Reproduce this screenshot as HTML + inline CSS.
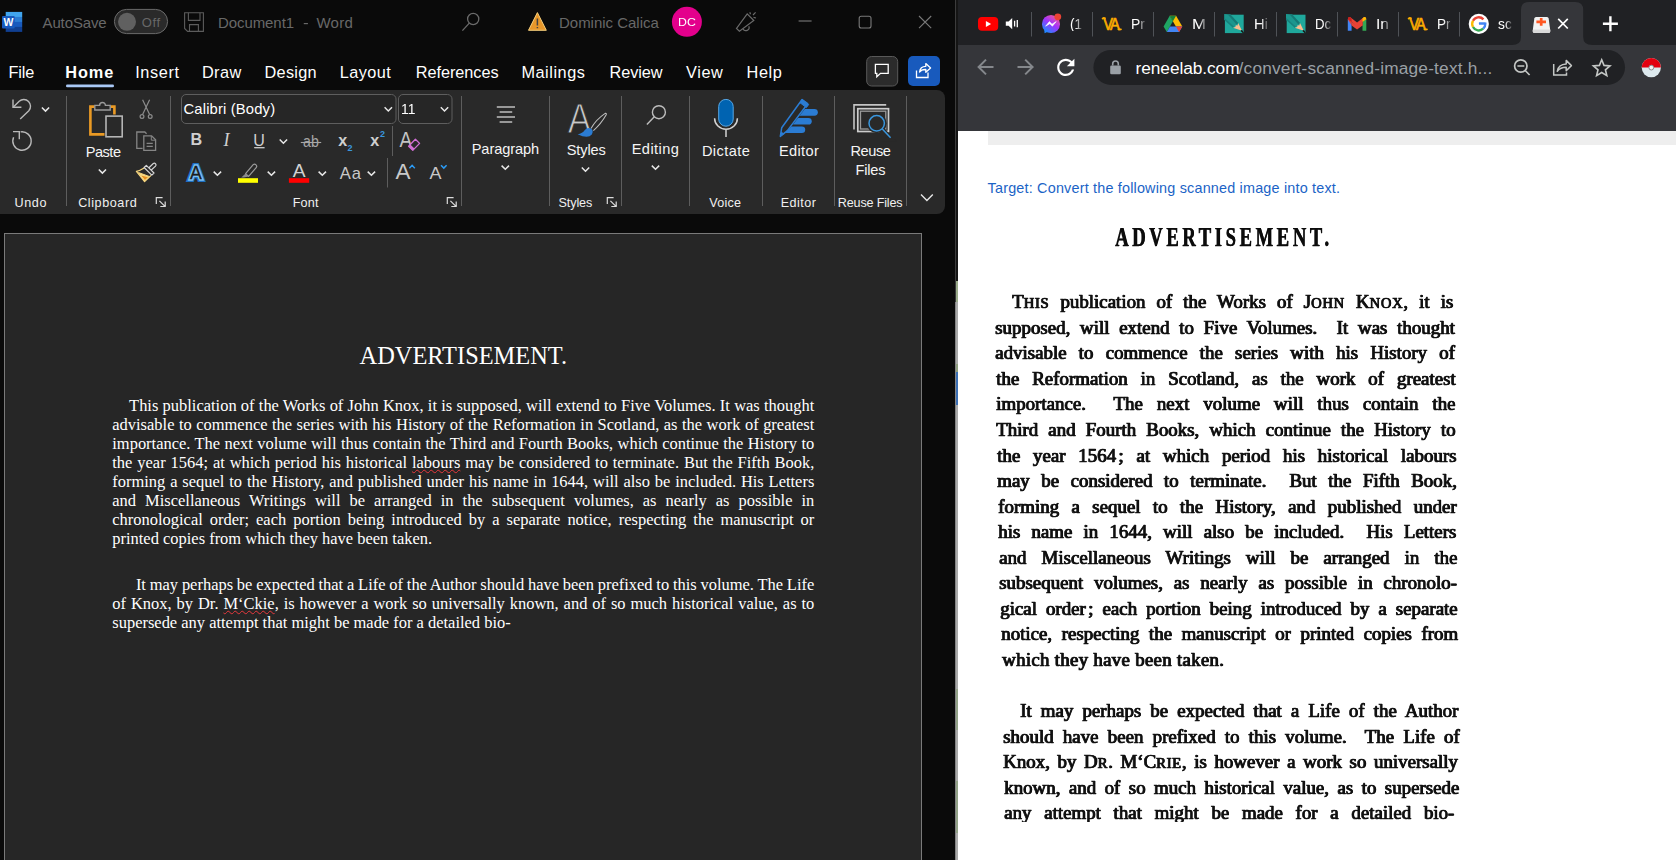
<!DOCTYPE html>
<html lang="en">
<head>
<meta charset="utf-8">
<title>Document1 - Word / reneelab.com</title>
<style>
html,body{margin:0;padding:0}
body{width:1676px;height:860px;overflow:hidden;position:relative;background:#0a0a0a;font-family:"Liberation Sans",sans-serif}
.a{position:absolute}
.t{position:absolute;white-space:pre}
svg{position:absolute;overflow:visible}
.sep{position:absolute;width:1px;background:#5b5b5b}
#word{left:0;top:0;width:955px;height:860px;background:#0a0a0a;overflow:hidden}
#ribbon{left:-10px;top:90px;width:955px;height:124px;background:#292929;border-radius:8px}
#page{left:4px;top:233px;width:918px;height:640px;background:#262626;border:1px solid #7a7a7a;box-sizing:border-box}
.doc{position:absolute;left:112.3px;width:702px;font:16.47px/18.93px "Liberation Serif",serif;color:#fff;text-align:justify;margin:0}
.dl{position:absolute;white-space:nowrap;font:16.47px/18.93px "Liberation Serif",serif;color:#fff;text-align:justify;text-align-last:justify}
.sq{text-decoration:underline wavy #e8383d 1px;text-underline-offset:0.5px;text-decoration-skip-ink:none}
#chrome{left:958px;top:0;width:718px;height:860px;background:#fff;overflow:hidden}
.tsep{position:absolute;top:12px;width:1px;height:25px;background:#4d5055}
.stitle{position:absolute;white-space:pre;font-family:"Liberation Serif",serif;font-weight:700;color:#0c0c0c;-webkit-text-stroke:.25px #0c0c0c;text-shadow:.6px 0 0 #0c0c0c;filter:blur(.35px)}
.scan{position:absolute;white-space:nowrap;font:400 19.6px/26px "Liberation Serif",serif;color:#111;text-align:justify;text-align-last:justify;-webkit-text-stroke:.7px #101010;text-shadow:.7px 0 0 #101010;filter:blur(.4px)}
</style>
</head>
<body>

<!-- ======================= WORD WINDOW ======================= -->
<div id="word" class="a">
  <div id="ribbon" class="a"></div>
  <svg width="955" height="230" viewBox="0 0 955 230" style="left:0;top:0" fill="none" stroke-linecap="butt">
  <!-- Word logo -->
  <rect x="5.7" y="11.9" width="16.5" height="5.1" fill="#41a5ee"/>
  <rect x="5.7" y="16.9" width="16.5" height="5.1" fill="#2b7cd3"/>
  <rect x="5.7" y="21.9" width="16.5" height="5.1" fill="#185abd"/>
  <rect x="5.7" y="26.9" width="16.5" height="5" fill="#103f91"/>
  <rect x="2" y="16" width="12.7" height="12.6" rx="1" fill="#185abd"/>
  <text x="8.35" y="26.3" text-anchor="middle" font-family="Liberation Sans, sans-serif" font-weight="700" font-size="10.5" fill="#fff">W</text>
  <!-- autosave toggle -->
  <rect x="114.4" y="9.4" width="53.2" height="24.2" rx="12.1" fill="#2a2a2a" stroke="#6b6b6b" stroke-width="1"/>
  <circle cx="127" cy="21.8" r="9" fill="#606060"/>
  <!-- save -->
  <g stroke="#5c5c5c" stroke-width="1.1">
    <path d="M184.6 12.7H203.4V31.4H187.6L184.6 28.4Z"/>
    <path d="M188.4 12.7V20.4H200V12.7"/>
    <path d="M189.5 31.4V24.6H198.4V31.4"/>
  </g>
  <!-- search -->
  <g stroke="#6b6b6b" stroke-width="1.3">
    <circle cx="473.2" cy="19" r="5.6"/>
    <path d="M469.3 23.1L462.4 30.6"/>
  </g>
  <!-- warning -->
  <path d="M537.4 12.6L546.3 30.3H528.5Z" fill="#e8972a" stroke="#f6cf7c" stroke-width="1" stroke-linejoin="round"/>
  <path d="M537.4 18.5V25.6M537.4 27V28.2" stroke="#444" stroke-width="1.5"/>
  <!-- avatar -->
  <circle cx="686.9" cy="21.8" r="15" fill="#e3008c"/>
  <!-- megaphone -->
  <g stroke="#6b6b6b" stroke-width="1.2" stroke-linejoin="miter">
    <path d="M747.2 13.8L753.8 20.5L739.4 31.3L736.5 28.5Z"/>
    <path d="M743 28.7A3 3 0 0 0 748.8 26.2"/>
    <path d="M749.8 12.3L750.5 14.2M753 15L755.6 12.4M753.5 17.4L756 18"/>
  </g>
  <!-- window buttons -->
  <g stroke="#7a7a7a" stroke-width="1.1">
    <path d="M798.6 21H811.6"/>
    <rect x="859.2" y="16.2" width="11.8" height="11.8" rx="2"/>
    <path d="M919 16L931.2 28.2M931.2 16L919 28.2"/>
  </g>
  <!-- tab underline -->
  <rect x="66" y="84.6" width="48" height="2.6" rx="1.3" fill="#a9c8f5"/>
  <!-- comment / share buttons -->
  <rect x="866.7" y="56.5" width="31" height="29.5" rx="5" fill="#2b2b2b" stroke="#595959" stroke-width="1"/>
  <path d="M875.4 64.3H888.2V73.3H880.5L876.8 76.8V73.3H875.4Z" stroke="#fff" stroke-width="1.3" stroke-linejoin="miter"/>
  <rect x="908" y="56" width="32" height="30" rx="5" fill="#185abd"/>
  <g stroke="#fff" stroke-width="1.3">
    <path d="M916.5 70.5V77.5H928V72.5"/>
    <path d="M919.5 72C920 68 923 66.3 925.8 66.3V63.6L930.6 67.9L925.8 72.2V69.5C923.5 69.4 921 70 919.5 72Z" stroke-linejoin="round"/>
  </g>

  <!-- ============ ribbon ============ -->
  <!-- separators -->
  <g stroke="#5d5d5d" stroke-width="1">
    <path d="M66.5 96V206M170.5 96V206M461.5 96V206M549.5 96V206M621.5 96V206M689.5 96V206M762.5 96V206M834.5 96V206M906.5 96V206"/>
    <path d="M392.5 126V156M387.5 158V187.5"/>
  </g>
  <!-- font boxes -->
  <rect x="181.5" y="94.5" width="214.5" height="29" rx="4.5" stroke="#5e5e5e" stroke-width="1" fill="#262626"/>
  <rect x="398.5" y="94.5" width="53.5" height="29" rx="4.5" stroke="#5e5e5e" stroke-width="1" fill="#262626"/>
  <!-- undo / redo -->
  <g stroke="#b9b9b9" stroke-width="1.4">
    <path d="M13 99.6V107.3H21.4"/>
    <path d="M13.4 106.9L19.2 101.2A6.8 6.8 0 0 1 28.8 110.8L20.2 119"/>
    <path d="M13 131.6H19.3V139.2"/>
    <path d="M20.6 131.9A9.2 9.2 0 1 1 13.6 137.2"/>
  </g>
  <!-- small chevrons -->
  <g stroke="#e8e8e8" stroke-width="1.5">
    <path d="M41.9 107.4L45.5 111.1L49.1 107.4"/>
    <path d="M98.8 169.4L102.4 173.1L106 169.4"/>
    <path d="M384.6 107.3L388.3 111L392 107.3"/>
    <path d="M440.8 107.3L444.5 111L448.2 107.3"/>
    <path d="M279.7 139.5L283.4 143.2L287.1 139.5"/>
    <path d="M213.7 171.6L217.4 175.3L221.1 171.6"/>
    <path d="M267.7 171.6L271.4 175.3L275.1 171.6"/>
    <path d="M318.6 171.6L322.3 175.3L326 171.6"/>
    <path d="M367.7 171.6L371.4 175.3L375.1 171.6"/>
    <path d="M501.6 165.6L505.3 169.3L509 165.6"/>
    <path d="M581.8 167.5L585.5 171.2L589.2 167.5"/>
    <path d="M651.8 165.6L655.5 169.3L659.2 165.6"/>
    <path d="M921 194.6L926.9 200.4L932.8 194.6" stroke-width="1.4"/>
  </g>
  <!-- paste -->
  <path d="M94.5 106.6H90.4V134.4H104.5M110.5 106.6H114.4V114.5" stroke="#ea9a24" stroke-width="2.6"/>
  <path d="M94.5 106.6H90.4V134.4H104.5M110.5 106.6H114.4V114.5" stroke="#f8c869" stroke-width="0.8" transform="translate(-0.9,0)" opacity=".0"/>
  <path d="M94.8 110V105.4H99.6A2.9 2.9 0 0 1 105.4 105.4H110.2V110Z" stroke="#9a9a9a" stroke-width="1.4" fill="#292929"/>
  <rect x="106" y="116.1" width="16.2" height="20.7" stroke="#b5b5b5" stroke-width="1.6" fill="#292929"/>
  <!-- cut (disabled) -->
  <g stroke="#8c8c8c" stroke-width="1.2">
    <path d="M142.6 99.8L149.6 114.6M149.6 99.8L142.6 114.6"/>
    <circle cx="142" cy="116.5" r="1.9"/>
    <circle cx="150.2" cy="116.5" r="1.9"/>
  </g>
  <!-- copy (disabled) -->
  <g stroke="#858585" stroke-width="1.3">
    <path d="M142.6 148.3H136.8V132H144.8L146.6 133.8"/>
    <path d="M143.8 135.8H151.6L155.6 139.8V150.4H143.8Z"/>
    <path d="M151.3 136V140.2H155.4" stroke-width="1"/>
    <path d="M146.6 143.4H152.8M146.6 146.4H152.8" stroke-width="1.1"/>
  </g>
  <!-- format painter -->
  <path d="M137.600 172.300L149.700 176.700L144.600 181.400Z" fill="#f8da86"/>
  <path d="M141.200 175.400L148 177.300L145 180Z" fill="#e8901f"/>
  <path d="M144.200 168Q140 170.600 136.400 171.400L144.600 181.500L151.100 175.400" stroke="#f7d67e" stroke-width="1.200" stroke-linejoin="round"/>
  <path d="M138.400 172.500L149.600 176.600" stroke="#f7d67e" stroke-width="1"/>
  <path d="M148.900 167.700L153.300 163.500Q154.600 162.600 155.600 163.800Q156.600 165 155.500 166.100L151.300 170" stroke="#d6d6d6" stroke-width="1.200" fill="#292929"/>
  <path d="M144.100 167.500L146.300 165.400L154 173L151.800 175.100Z" stroke="#d6d6d6" stroke-width="1.200" fill="#292929" stroke-linejoin="round"/>
  <!-- dialog launchers -->
  <g stroke="#dcdcdc" stroke-width="1.2">
    <path d="M156.3 204V197.7H162.6M159.4 200.8L165 206.4M165.2 201.6V206.5H160.3"/>
    <path d="M447.3 204V197.7H453.6M450.4 200.8L456 206.4M456.2 201.6V206.5H451.3"/>
    <path d="M607.3 204V197.7H613.6M610.4 200.8L616 206.4M616.2 201.6V206.5H611.3"/>
  </g>

  <!-- B I U ab x2 x2 -->
  <g font-family="Liberation Sans, sans-serif" fill="#cfcfcf" stroke="none">
    <text x="190.6" y="145.4" font-weight="700" font-size="16.2">B</text>
    <text x="223.6" y="145.6" font-family="Liberation Serif, serif" font-style="italic" font-size="18">I</text>
    <text x="253.3" y="145.5" font-size="16.6" textLength="11.6" lengthAdjust="spacingAndGlyphs">U</text>
    <text x="303" y="147" font-size="15.6" fill="#a6a6a6" textLength="15.8" lengthAdjust="spacingAndGlyphs">ab</text>
    <text x="338.2" y="146" font-weight="700" font-size="16" textLength="9" lengthAdjust="spacingAndGlyphs">x</text>
    <text x="347.6" y="150.8" font-weight="700" font-size="9" fill="#3a96dd">2</text>
    <text x="370.2" y="146" font-weight="700" font-size="16" textLength="9" lengthAdjust="spacingAndGlyphs">x</text>
    <text x="380" y="137.4" font-weight="700" font-size="9" fill="#3a96dd">2</text>
    <!-- clear formatting -->
    <text x="399.6" y="147" font-size="21.4" fill="#c4c4c4" textLength="12.6" lengthAdjust="spacingAndGlyphs">A</text>
    <!-- font colour -->
    <text x="292.8" y="176.8" font-size="18" fill="#d2d2d2" textLength="12.8" lengthAdjust="spacingAndGlyphs">A</text>
    <!-- change case -->
    <text x="339.8" y="179.2" font-size="16.6" fill="#c8c8c8" textLength="21.2" lengthAdjust="spacing">Aa</text>
    <!-- grow / shrink -->
    <text x="395.6" y="179.2" font-size="21.4" fill="#c8c8c8" textLength="15" lengthAdjust="spacingAndGlyphs">A</text>
    <text x="429.6" y="179.2" font-size="17.2" fill="#c8c8c8" textLength="12" lengthAdjust="spacingAndGlyphs">A</text>
    <!-- styles big A -->
    <text x="567.8" y="133.3" font-size="43.4" fill="#c8c8c8" textLength="23.6" lengthAdjust="spacingAndGlyphs" stroke="#292929" stroke-width="1">A</text>
  </g>
  <path d="M254.2 147.7H264.6" stroke="#cfcfcf" stroke-width="1.3"/>
  <path d="M300.8 142.5H321.2" stroke="#a6a6a6" stroke-width="1.1"/>
  <!-- eraser -->
  <path d="M408.6 146.2L415.4 139.2L419.6 143.4L412.8 150.4Z" stroke="#d06fd3" stroke-width="1.3" fill="#292929" stroke-linejoin="round"/>
  <path d="M410.4 144.4L414.4 148.6L412.8 150.4L408.6 146.2Z" fill="#d06fd3"/>
  <!-- grow/shrink carets -->
  <path d="M409.4 168.2L412.1 165.3L414.8 168.2M441 165.2L443.8 168.1L446.6 165.2" stroke="#2b9af3" stroke-width="1.5"/>
  <!-- text effects A -->
  <g font-family="Liberation Sans, sans-serif" font-size="17.6" stroke-linejoin="miter" stroke-miterlimit="2.5">
    <text x="190" y="178.700" fill="#1e6fc2" stroke="#1e6fc2" stroke-width="5.800">A</text>
    <text x="190" y="178.700" fill="#7dbff2" stroke="#7dbff2" stroke-width="3.300">A</text>
    <text x="190" y="178.700" fill="#1c1c1c" stroke="#1c1c1c" stroke-width=".3">A</text>
  </g>
  <!-- highlighter -->
  <rect x="238" y="178.2" width="20" height="4.6" fill="#ffff00"/>
  <path d="M245.6 173.6L253.2 164.6Q254.6 163.4 256 164.8Q257.4 166.2 256.2 167.6L248.6 176.4Z" stroke="#9b9b9b" stroke-width="1.2" stroke-linejoin="round"/>
  <path d="M245.6 173.6L248.6 176.4L244 177.6L241.2 177.6Z" fill="#8a8a8a"/>
  <!-- font colour bar -->
  <rect x="288.9" y="178.2" width="20.3" height="4.6" fill="#ff0000"/>
  <!-- paragraph -->
  <path d="M496.8 107H515M499.6 112H512.2M496.8 117H515M499.6 122H512.2" stroke="#bdbdbd" stroke-width="1.5"/>
  <!-- styles brush -->
  <path d="M591 128.4Q596 119.600 605.2 113.4Q606.800 113.200 606.2 114.800Q601 124 593.4 130.600" stroke="#bdbdbd" stroke-width="1.1" fill="#292929"/>
  <path d="M577.6 134.2Q582.6 133.4 584.6 130.2Q587.4 127 591 128.600Q594 130.800 591.8 134.4Q588 139.200 577.6 134.2Z" fill="#2b7cd3"/>
  <!-- editing magnifier -->
  <g stroke="#bdbdbd" stroke-width="1.4">
    <circle cx="658.9" cy="112.2" r="6.5"/>
    <path d="M654.3 116.800L646.9 124.6"/>
  </g>
  <!-- dictate -->
  <rect x="718.7" y="99.4" width="14.5" height="26.8" rx="7.2" fill="#0063b1" stroke="#56a7e6" stroke-width="1"/>
  <path d="M714.6 118.3A11.4 11 0 0 0 737.4 118.3M726 129.400V137" stroke="#d2d2d2" stroke-width="1.5"/>
  <!-- editor pen -->
  <g fill="#2b7cd3">
    <path d="M804.800 108.900H814.400A3.450 3.450 0 0 1 814.400 115.800H799.600Z"/>
    <path d="M798 117.900H808.400A3.350 3.350 0 0 1 808.400 124.600H793Z"/>
    <path d="M791.400 126.500H801.900A3.300 3.300 0 0 1 801.900 133.100H784.800Z"/>
  </g>
  <path d="M802.100 99.500L807.600 103.700L787.400 130.600L780.300 136.400L781.700 127.800Z" stroke="#2b7cd3" stroke-width="1.500" fill="#292929" stroke-linejoin="round"/>
  <path d="M802.100 99.500L808.700 104.500L806.400 107.600L799.800 102.600Z" fill="#2b7cd3" stroke="#2b7cd3" stroke-width="1"/>
  <path d="M780.300 136.400L781.300 131.600L784.400 134Z" fill="#2b7cd3"/>
  <!-- reuse files -->
  <g stroke="#c4c4c4" stroke-width="1.600">
    <path d="M854 129.400V104.900H886.200"/>
    <rect x="857.800" y="108.700" width="30.700" height="22.800" stroke="#cccccc" stroke-width="1.700"/>
    <rect x="860.500" y="111.200" width="25.300" height="17.800" stroke="#9a9a9a" stroke-width="1.300"/>
  </g>
  <path d="M879 125.500L892 139.300L884 139.300Z" fill="#292929" stroke="#292929" stroke-width="4"/>
  <circle cx="876.700" cy="123.300" r="10" fill="#292929"/>
  <circle cx="876.700" cy="123.300" r="7.700" fill="#292929" stroke="#3a96dd" stroke-width="1.500"/>
  <path d="M882.300 128.900L890.600 137.700" stroke="#3a96dd" stroke-width="1.500"/>
</svg>

  <div id="page" class="a"></div>
  <p class="doc" style="top:341.8px;text-align:center;font-size:24.4px;line-height:28px">ADVERTISEMENT.</p>
  <div class="dl" style="left:129.1px;top:396.8px;width:685.2px;">This publication of the Works of John Knox, it is supposed, will extend to Five Volumes. It was thought</div>
<div class="dl" style="left:112.3px;top:415.7px;width:702.0px;">advisable to commence the series with his History of the Reformation in Scotland, as the work of greatest</div>
<div class="dl" style="left:112.3px;top:434.7px;width:702.0px;">importance. The next volume will thus contain the Third and Fourth Books, which continue the History to</div>
<div class="dl" style="left:112.3px;top:453.6px;width:702.0px;">the year 1564; at which period his historical <span class="sq">labours</span> may be considered to terminate. But the Fifth Book,</div>
<div class="dl" style="left:112.3px;top:472.5px;width:702.0px;">forming a sequel to the History, and published under his name in 1644, will also be included. His Letters</div>
<div class="dl" style="left:112.3px;top:491.5px;width:702.0px;">and Miscellaneous Writings will be arranged in the subsequent volumes, as nearly as possible in</div>
<div class="dl" style="left:112.3px;top:511.1px;width:702.0px;">chronological order; each portion being introduced by a separate notice, respecting the manuscript or</div>
<div class="dl" style="left:112.3px;top:530.0px;width:702.0px;text-align-last:left;">printed copies from which they have been taken.</div>
<div class="dl" style="left:135.9px;top:575.9px;width:678.4px;word-spacing:-0.33px;">It may perhaps be expected that a Life of the Author should have been prefixed to this volume. The Life</div>
<div class="dl" style="left:112.3px;top:594.8px;width:702.0px;">of Knox, by Dr. <span class="sq">M‘Ckie</span>, is however a work so universally known, and of so much historical value, as to</div>
<div class="dl" style="left:112.3px;top:613.7px;width:702.0px;text-align-last:left;">supersede any attempt that might be made for a detailed bio-</div>
</div>
<div class="a" style="left:955px;top:0;width:1px;height:860px;background:linear-gradient(180deg,#3c3c3c 0,#3c3c3c 302px,#858585 302px,#858585 860px)"></div>
<div class="a" style="left:956px;top:0;width:2px;height:860px;background:linear-gradient(180deg,#151515 0,#151515 281px,#9aab8a 281px,#9aab8a 302px,#aaaaaa 302px,#aaaaaa 364px,#8fa080 364px,#8fa080 372px,#3b6fb5 372px,#3b6fb5 405px,#aaaaaa 405px,#aaaaaa 689px,#93a388 689px,#93a388 730px,#aaaaaa 730px,#aaaaaa 781px,#93a388 781px,#93a388 833px,#aaaaaa 833px,#aaaaaa 860px)"></div>

<!-- ======================= CHROME WINDOW ======================= -->
<div id="chrome" class="a">
  <div class="a" style="left:0;top:0;width:718px;height:45px;background:#202124"></div>
  <div class="a" style="left:0;top:44.5px;width:718px;height:86px;background:#35363a"></div>
  <div class="a" style="left:83.600px;top:14.700px;width:18.600px;height:18px;border-radius:50%;background:linear-gradient(35deg,#1a8cff 10%,#a033ff 52%,#ff5c87 95%)"></div>
<svg width="718" height="150" viewBox="958 0 718 150" style="left:0;top:0" fill="none">
  <!-- active tab -->
  <path d="M1512 45Q1521 45 1521 37V10Q1521 2 1529 2H1575.200Q1583.200 2 1583.200 10V37Q1583.200 45 1592.400 45Z" fill="#35363a"/>
  <!-- tab separators -->
  <path d="M1031.500 12V36.500M1092.500 12V36.500M1153.500 12V36.500M1214.500 12V36.500M1276.500 12V36.500M1337.500 12V36.500M1398.500 12V36.500M1459.500 12V36.500" stroke="#4f5257" stroke-width="1"/>
  <!-- youtube -->
  <rect x="978" y="16.900" width="20.200" height="13.900" rx="4" fill="#ff0000"/>
  <path d="M985.900 21L991.100 23.900L985.900 26.900Z" fill="#fff"/>
  <!-- speaker -->
  <path d="M1005.800 21.400H1008.600L1012.200 18V29.200L1008.600 25.800H1005.800Z" fill="#fff"/>
  <path d="M1014.600 20.800V26.400M1017.300 20V27.200" stroke="#fff" stroke-width="1.300"/>
  <!-- messenger -->
  <path d="M1044.200 29.600L1044.600 33.200L1048.200 31.600Z" fill="#2487ff"/>
  <path d="M1045.600 26.200L1049.400 21.600L1052 24.200L1056.200 21.600L1052.400 26.200L1049.800 23.700Z" fill="#fff" stroke="#fff" stroke-width=".6" stroke-linejoin="round"/>
  <circle cx="1057.800" cy="16.800" r="3.400" fill="#ea4335"/>
  <!-- VA logo x2 : real text so that it stays text -->
  <g font-family="Liberation Sans, sans-serif" font-weight="400" font-size="17.4" fill="#fbab00" stroke="#fbab00" stroke-width=".7" letter-spacing="-2.1">
    <text transform="translate(1103.2 29.7) scale(.84 1)">VA</text>
    <text transform="translate(1409.2 29.7) scale(.84 1)">VA</text>
  </g>
  <path d="M1102.600 18.600Q1103.600 17.500 1105 18.200M1118.400 29.300H1121M1408.600 18.600Q1409.600 17.500 1411 18.200M1424.400 29.300H1427" stroke="#fbab00" stroke-width="1.700" stroke-linecap="round"/>
  <!-- drive -->
  <path d="M1169.700 15.800H1176.100L1182.300 26.600H1175.900Z" fill="#fbbc04"/>
  <path d="M1169.700 15.800L1172.900 21.300L1166.800 31.900L1163.600 26.400Z" fill="#1fa463"/>
  <path d="M1169.700 15.800H1176.100L1172.900 21.300Z" fill="#188038"/>
  <path d="M1166.800 31.900L1170 26.600H1182.300L1179.100 31.900Z" fill="#4285f4"/>
  <path d="M1182.300 26.600L1179.100 31.900L1176 26.600Z" fill="#ea4335"/>
  <path d="M1163.600 26.400L1166.800 31.900L1170 26.600L1166.800 21Z" fill="#1a73e8" opacity="0"/>
  <!-- teal pencil icons -->
  <g>
    <rect x="1224.900" y="14.700" width="18.800" height="18.400" fill="#1fa89c"/>
    <path d="M1224.200 14.100L1230.400 14.400L1238.200 22.900L1233 27.800L1224.200 19.800Z" fill="#1b968e"/>
    <path d="M1227.600 14.300L1230.400 14.400L1238.200 22.900L1236.600 24.400Z" fill="#157a76"/>
    <path d="M1224.200 17.800V19.800L1233 27.800L1234.200 26.700Z" fill="#17827d"/>
    <path d="M1238.200 22.900L1242 30.800L1233 27.800L1235.400 27L1235.800 25.300L1237.600 25.400Z" fill="#fbbd90"/>
    <path d="M1241 30.600L1243.600 33.200L1242.200 31Z" stroke="#1a1a1a" stroke-width="1.100" fill="#111"/>
  </g>
  <g transform="translate(61.8 0)">
    <rect x="1224.900" y="14.700" width="18.800" height="18.400" fill="#1fa89c"/>
    <path d="M1224.200 14.100L1230.400 14.400L1238.200 22.900L1233 27.800L1224.200 19.800Z" fill="#1b968e"/>
    <path d="M1227.600 14.300L1230.400 14.400L1238.200 22.900L1236.600 24.400Z" fill="#157a76"/>
    <path d="M1224.200 17.800V19.800L1233 27.800L1234.200 26.700Z" fill="#17827d"/>
    <path d="M1238.200 22.900L1242 30.800L1233 27.800L1235.400 27L1235.800 25.300L1237.600 25.400Z" fill="#fbbd90"/>
    <path d="M1241 30.600L1243.600 33.200L1242.200 31Z" stroke="#1a1a1a" stroke-width="1.100" fill="#111"/>
  </g>
  <!-- gmail -->
  <path d="M1347.800 19V30.700H1351.600V21.800Z" fill="#4285f4"/>
  <path d="M1366.300 19V30.700H1362.500V21.800Z" fill="#34a853"/>
  <path d="M1347.800 19.200Q1347.800 17 1350 17.100L1357.050 22.400L1364.100 17.100Q1366.300 17 1366.300 19.200L1366.300 19L1362.500 21.800V25.400L1357.050 27.300L1351.600 21.800V25.400Z" fill="#ea4335"/>
  <path d="M1351.600 21.800L1357.050 25.900L1362.500 21.800V25.400L1357.050 29.500L1351.600 25.400Z" fill="#ea4335"/>
  <path d="M1362.500 18.300L1364.100 17.100Q1366.300 16.800 1366.300 19.200L1362.500 21.900Z" fill="#fbbc04"/>
  <path d="M1351.600 18.300L1350 17.100Q1347.800 16.800 1347.800 19.200L1351.600 21.900Z" fill="#c5221f"/>
  <!-- google -->
  <circle cx="1478.800" cy="23.900" r="10.100" fill="#fff"/>
  <path d="M1478.900 22.600H1485.400A6.700 6.700 0 0 1 1485.500 23.900H1478.900Z" fill="#4285f4"/>
  <path d="M1483.400 19.300A6.500 6.500 0 0 0 1473 20.800" stroke="#ea4335" stroke-width="2.400"/>
  <path d="M1473 20.800A6.500 6.500 0 0 0 1473 27" stroke="#fbbc04" stroke-width="2.400"/>
  <path d="M1473 27A6.500 6.500 0 0 0 1483.200 28.700" stroke="#34a853" stroke-width="2.400"/>
  <path d="M1483.200 28.700A6.500 6.500 0 0 0 1485.300 23.600H1479" stroke="#4285f4" stroke-width="2.400"/>
  <!-- first-aid favicon -->
  <path d="M1536 17H1547Q1548.400 17 1548.700 18.500L1550.300 31Q1550.500 33 1548.500 33H1534.500Q1532.500 33 1532.700 31L1534.300 18.500Q1534.600 17 1536 17Z" fill="#f2f2f2"/>
  <path d="M1533 29.500H1550.200L1550.300 31Q1550.500 33 1548.500 33H1534.500Q1532.500 33 1532.700 31Z" fill="#d9d9d9"/>
  <path d="M1541.200 17.900V25.700M1536.400 21.800H1546" stroke="#ff5722" stroke-width="2.700"/>
  <!-- tab close / new tab -->
  <path d="M1558.200 18.900L1567.800 28.500M1567.800 18.900L1558.200 28.500" stroke="#fff" stroke-width="1.700"/>
  <path d="M1610.400 16.200V31.200M1602.900 23.700H1617.900" stroke="#fff" stroke-width="2.400"/>
  <!-- nav -->
  <g stroke="#85888c" stroke-width="2">
    <path d="M993.500 67H978.500M986 59.600L978.600 67L986 74.400"/>
    <path d="M1017.500 67H1032.600M1025.200 59.600L1032.600 67L1025.200 74.400"/>
  </g>
  <path transform="translate(1052.900 54.500) scale(1.075)" d="M17.65 6.35C16.2 4.9 14.21 4 12 4c-4.42 0-7.990 3.580-7.990 8s3.570 8 7.990 8c3.730 0 6.840-2.550 7.730-6h-2.080c-.820 2.330-3.040 4-5.650 4-3.310 0-6-2.690-6-6s2.690-6 6-6c1.660 0 3.140.690 4.220 1.780L13 11h7V4l-2.350 2.350z" fill="#fff"/>
  <!-- omnibox -->
  <rect x="1093.400" y="49.900" width="531.600" height="35" rx="17.500" fill="#202124"/>
  <rect x="1110.200" y="65.400" width="10.600" height="8.900" rx="1.300" fill="#9aa0a6"/>
  <path d="M1112.700 65.600V63.800A2.800 2.800 0 0 1 1118.300 63.800V65.600" stroke="#9aa0a6" stroke-width="1.600"/>
  <!-- zoom -->
  <g stroke="#c4c7c5" stroke-width="1.700">
    <circle cx="1520.800" cy="66" r="6.200"/>
    <path d="M1517.400 66H1524.300M1525.200 70.500L1529.600 75"/>
  </g>
  <!-- share -->
  <g stroke="#c4c7c5" stroke-width="1.500" stroke-linejoin="miter">
    <path d="M1553.700 63.900V75H1566.500V72.400"/>
    <path d="M1557.300 71.300C1558 66.500 1561.500 64.200 1566.200 64V60.400L1571.400 65.600L1566.200 70.800V67.300C1562.500 67.300 1559.500 68.300 1557.300 71.300Z" stroke-linejoin="round"/>
  </g>
  <!-- star -->
  <path d="M1601.700 59.800L1604 65.400L1610 65.900L1605.400 69.800L1606.800 75.600L1601.700 72.500L1596.600 75.600L1598 69.800L1593.400 65.900L1599.400 65.400Z" stroke="#c4c7c5" stroke-width="1.600" stroke-linejoin="miter"/>
  <!-- pokeball -->
  <circle cx="1651.300" cy="67.600" r="9.600" fill="#dde9ee"/>
  <path d="M1641.700 67.600A9.600 9.600 0 0 1 1660.900 67.600Z" fill="#e3000f"/>
  <circle cx="1651.300" cy="67.600" r="2.400" fill="#f4f4f4" stroke="#8a8f94" stroke-width="1"/>
</svg>

  <div class="a" style="left:30px;top:130.5px;width:700px;height:14px;background:#eeeeee"></div>
  <div id="scanclip" class="a" style="left:0;top:205px;width:718px;height:616.5px;overflow:hidden">
  <div class="stitle" style="left:156.8px;top:19.1px;font-size:26.7px;line-height:26.7px;letter-spacing:5.09px;transform:scaleX(0.7);transform-origin:0 0">ADVERTISEMENT.</div>
<div class="scan" style="left:54.3px;top:84.3px;width:457.1px;transform:scaleX(0.965);transform-origin:0 0;">T<span style="font-size:15.2px;letter-spacing:.7px">HIS</span> publication of the Works of J<span style="font-size:15.2px;letter-spacing:.7px">OHN</span> K<span style="font-size:15.2px;letter-spacing:.7px">NOX</span>, it is</div>
<div class="scan" style="left:36.5px;top:109.8px;width:476.4px;transform:scaleX(0.965);transform-origin:0 0;">supposed, will extend to Five Volumes.&nbsp; It was thought</div>
<div class="scan" style="left:37.0px;top:135.4px;width:476.5px;transform:scaleX(0.965);transform-origin:0 0;">advisable to commence the series with his History of</div>
<div class="scan" style="left:37.5px;top:160.9px;width:476.2px;transform:scaleX(0.965);transform-origin:0 0;">the Reformation in Scotland, as the work of greatest</div>
<div class="scan" style="left:38.1px;top:186.4px;width:476.0px;transform:scaleX(0.965);transform-origin:0 0;">importance.&nbsp; The next volume will thus contain the</div>
<div class="scan" style="left:38.4px;top:212.0px;width:476.1px;transform:scaleX(0.965);transform-origin:0 0;">Third and Fourth Books, which continue the History to</div>
<div class="scan" style="left:38.9px;top:237.5px;width:476.0px;transform:scaleX(0.965);transform-origin:0 0;">the year 1564<span style="margin-left:2.5px">;</span> at which period his historical labours</div>
<div class="scan" style="left:39.3px;top:263.1px;width:476.4px;transform:scaleX(0.965);transform-origin:0 0;">may be considered to terminate.&nbsp; But the Fifth Book,</div>
<div class="scan" style="left:39.9px;top:288.6px;width:475.2px;transform:scaleX(0.965);transform-origin:0 0;">forming a sequel to the History, and published under</div>
<div class="scan" style="left:40.4px;top:314.2px;width:474.8px;transform:scaleX(0.965);transform-origin:0 0;">his name in 1644, will also be included.&nbsp; His Letters</div>
<div class="scan" style="left:40.5px;top:339.7px;width:474.9px;transform:scaleX(0.965);transform-origin:0 0;">and Miscellaneous Writings will be arranged in the</div>
<div class="scan" style="left:41.2px;top:365.2px;width:474.4px;transform:scaleX(0.965);transform-origin:0 0;">subsequent volumes, as nearly as possible in chronolo-</div>
<div class="scan" style="left:42.2px;top:390.8px;width:474.1px;transform:scaleX(0.965);transform-origin:0 0;">gical order<span style="margin-left:2.5px">;</span> each portion being introduced by a separate</div>
<div class="scan" style="left:42.9px;top:416.3px;width:473.6px;transform:scaleX(0.965);transform-origin:0 0;">notice, respecting the manuscript or printed copies from</div>
<div class="scan" style="left:43.9px;top:441.9px;width:232.7px;transform:scaleX(0.965);transform-origin:0 0;text-align-last:left;letter-spacing:.28px;">which they have been taken.</div>
<div class="scan" style="left:61.8px;top:493.3px;width:454.1px;transform:scaleX(0.965);transform-origin:0 0;">It may perhaps be expected that a Life of the Author</div>
<div class="scan" style="left:44.6px;top:518.8px;width:473.2px;transform:scaleX(0.965);transform-origin:0 0;">should have been prefixed to this volume.&nbsp; The Life of</div>
<div class="scan" style="left:45.4px;top:544.4px;width:471.3px;transform:scaleX(0.965);transform-origin:0 0;">Knox, by D<span style="font-size:15.2px;letter-spacing:.7px">R</span>. M‘C<span style="font-size:15.2px;letter-spacing:.7px">RIE</span>, is however a work so universally</div>
<div class="scan" style="left:45.6px;top:569.9px;width:471.7px;transform:scaleX(0.965);transform-origin:0 0;">known, and of so much historical value, as to supersede</div>
<div class="scan" style="left:46.3px;top:595.4px;width:466.5px;transform:scaleX(0.965);transform-origin:0 0;">any attempt that might be made for a detailed bio-</div>
  </div>
</div>

<!-- ======================= TEXT LAYER ======================= -->
<span class="t" style="left:42.5px;top:15.4px;font:400 15px/15px Liberation Sans,sans-serif;color:#686868;letter-spacing:-0.12px;">AutoSave</span>
<span class="t" style="left:141.8px;top:15.6px;font:400 13px/13px Liberation Sans,sans-serif;color:#686868;letter-spacing:0.56px;">Off</span>
<span class="t" style="left:218.0px;top:15.4px;font:400 15px/15px Liberation Sans,sans-serif;color:#686868;letter-spacing:-0.08px;">Document1</span>
<span class="t" style="left:303.2px;top:15.4px;font:400 15px/15px Liberation Sans,sans-serif;color:#686868;transform:scaleX(1.140);transform-origin:0 0;">-</span>
<span class="t" style="left:316.4px;top:15.4px;font:400 15px/15px Liberation Sans,sans-serif;color:#686868;letter-spacing:0.28px;">Word</span>
<span class="t" style="left:559.0px;top:15.4px;font:400 15px/15px Liberation Sans,sans-serif;color:#686868;letter-spacing:-0.02px;">Dominic Calica</span>
<span class="t" style="left:678.0px;top:17.1px;font:400 11.5px/11.5px Liberation Sans,sans-serif;color:#fff;transform:scaleX(1.071);transform-origin:0 0;">DC</span>
<span class="t" style="left:8.5px;top:64.2px;font:400 16.3px/16.3px Liberation Sans,sans-serif;color:#fff;letter-spacing:-0.11px;">File</span>
<span class="t" style="left:65.2px;top:64.2px;font:700 16.3px/16.3px Liberation Sans,sans-serif;color:#fff;letter-spacing:0.94px;">Home</span>
<span class="t" style="left:135.2px;top:64.2px;font:400 16.3px/16.3px Liberation Sans,sans-serif;color:#fff;letter-spacing:0.61px;">Insert</span>
<span class="t" style="left:201.9px;top:64.2px;font:400 16.3px/16.3px Liberation Sans,sans-serif;color:#fff;letter-spacing:0.47px;">Draw</span>
<span class="t" style="left:264.5px;top:64.2px;font:400 16.3px/16.3px Liberation Sans,sans-serif;color:#fff;letter-spacing:0.29px;">Design</span>
<span class="t" style="left:339.7px;top:64.2px;font:400 16.3px/16.3px Liberation Sans,sans-serif;color:#fff;letter-spacing:0.43px;">Layout</span>
<span class="t" style="left:415.8px;top:64.2px;font:400 16.3px/16.3px Liberation Sans,sans-serif;color:#fff;letter-spacing:-0.05px;">References</span>
<span class="t" style="left:521.4px;top:64.2px;font:400 16.3px/16.3px Liberation Sans,sans-serif;color:#fff;letter-spacing:0.55px;">Mailings</span>
<span class="t" style="left:609.5px;top:64.2px;font:400 16.3px/16.3px Liberation Sans,sans-serif;color:#fff;letter-spacing:-0.08px;">Review</span>
<span class="t" style="left:686.1px;top:64.2px;font:400 16.3px/16.3px Liberation Sans,sans-serif;color:#fff;letter-spacing:0.55px;">View</span>
<span class="t" style="left:746.6px;top:64.2px;font:400 16.3px/16.3px Liberation Sans,sans-serif;color:#fff;letter-spacing:0.55px;">Help</span>
<span class="t" style="left:14.5px;top:196.8px;font:400 12.6px/12.6px Liberation Sans,sans-serif;color:#f0f0f0;letter-spacing:0.62px;">Undo</span>
<span class="t" style="left:78.2px;top:196.8px;font:400 12.6px/12.6px Liberation Sans,sans-serif;color:#f0f0f0;letter-spacing:0.57px;">Clipboard</span>
<span class="t" style="left:292.7px;top:196.8px;font:400 12.6px/12.6px Liberation Sans,sans-serif;color:#f0f0f0;letter-spacing:0.22px;">Font</span>
<span class="t" style="left:558.6px;top:196.8px;font:400 12.6px/12.6px Liberation Sans,sans-serif;color:#f0f0f0;letter-spacing:-0.13px;">Styles</span>
<span class="t" style="left:709.2px;top:196.8px;font:400 12.6px/12.6px Liberation Sans,sans-serif;color:#f0f0f0;letter-spacing:0.26px;">Voice</span>
<span class="t" style="left:780.7px;top:196.8px;font:400 12.6px/12.6px Liberation Sans,sans-serif;color:#f0f0f0;letter-spacing:0.45px;">Editor</span>
<span class="t" style="left:837.8px;top:196.8px;font:400 12.6px/12.6px Liberation Sans,sans-serif;color:#f0f0f0;letter-spacing:-0.17px;">Reuse Files</span>
<span class="t" style="left:85.7px;top:145.2px;font:400 14.6px/14.6px Liberation Sans,sans-serif;color:#f5f5f5;letter-spacing:-0.49px;">Paste</span>
<span class="t" style="left:471.7px;top:141.5px;font:400 14.6px/14.6px Liberation Sans,sans-serif;color:#f5f5f5;letter-spacing:-0.08px;">Paragraph</span>
<span class="t" style="left:566.8px;top:143.3px;font:400 14.6px/14.6px Liberation Sans,sans-serif;color:#f5f5f5;letter-spacing:-0.16px;">Styles</span>
<span class="t" style="left:631.7px;top:141.5px;font:400 14.6px/14.6px Liberation Sans,sans-serif;color:#f5f5f5;letter-spacing:0.43px;">Editing</span>
<span class="t" style="left:701.9px;top:143.6px;font:400 14.6px/14.6px Liberation Sans,sans-serif;color:#f5f5f5;letter-spacing:0.43px;">Dictate</span>
<span class="t" style="left:778.9px;top:143.6px;font:400 14.6px/14.6px Liberation Sans,sans-serif;color:#f5f5f5;letter-spacing:0.35px;">Editor</span>
<span class="t" style="left:850.5px;top:143.6px;font:400 14.6px/14.6px Liberation Sans,sans-serif;color:#f5f5f5;letter-spacing:-0.46px;">Reuse</span>
<span class="t" style="left:855.5px;top:163.3px;font:400 14.6px/14.6px Liberation Sans,sans-serif;color:#f5f5f5;letter-spacing:-0.20px;">Files</span>
<span class="t" style="left:183.5px;top:102.0px;font:400 14.8px/14.8px Liberation Sans,sans-serif;color:#fff;letter-spacing:0.15px;">Calibri (Body)</span>
<span class="t" style="left:401.2px;top:102.0px;font:400 14.8px/14.8px Liberation Sans,sans-serif;color:#fff;transform:scaleX(0.937);transform-origin:0 0;">11</span>
<span class="t" style="left:1069.9px;top:16.3px;font:400 15px/15px Liberation Sans,sans-serif;color:#fff;transform:scaleX(0.907);transform-origin:0 0;-webkit-mask-image:linear-gradient(90deg,#000 50%,rgba(0,0,0,.2) 100%);">(1</span>
<span class="t" style="left:1131.2px;top:16.3px;font:400 15px/15px Liberation Sans,sans-serif;color:#fff;transform:scaleX(0.933);transform-origin:0 0;-webkit-mask-image:linear-gradient(90deg,#000 50%,rgba(0,0,0,.2) 100%);">Pr</span>
<span class="t" style="left:1192.2px;top:16.3px;font:400 15px/15px Liberation Sans,sans-serif;color:#fff;transform:scaleX(1.120);transform-origin:0 0;-webkit-mask-image:linear-gradient(90deg,#000 50%,rgba(0,0,0,.2) 100%);">M</span>
<span class="t" style="left:1253.7px;top:16.3px;font:400 15px/15px Liberation Sans,sans-serif;color:#fff;transform:scaleX(0.981);transform-origin:0 0;-webkit-mask-image:linear-gradient(90deg,#000 50%,rgba(0,0,0,.2) 100%);">Hi</span>
<span class="t" style="left:1314.9px;top:16.3px;font:400 15px/15px Liberation Sans,sans-serif;color:#fff;transform:scaleX(0.883);transform-origin:0 0;-webkit-mask-image:linear-gradient(90deg,#000 50%,rgba(0,0,0,.2) 100%);">Dc</span>
<span class="t" style="left:1376.2px;top:16.3px;font:400 15px/15px Liberation Sans,sans-serif;color:#fff;transform:scaleX(1.039);transform-origin:0 0;-webkit-mask-image:linear-gradient(90deg,#000 50%,rgba(0,0,0,.2) 100%);">In</span>
<span class="t" style="left:1437.2px;top:16.3px;font:400 15px/15px Liberation Sans,sans-serif;color:#fff;transform:scaleX(0.907);transform-origin:0 0;-webkit-mask-image:linear-gradient(90deg,#000 50%,rgba(0,0,0,.2) 100%);">Pr</span>
<span class="t" style="left:1498.4px;top:16.3px;font:400 15px/15px Liberation Sans,sans-serif;color:#fff;transform:scaleX(0.920);transform-origin:0 0;-webkit-mask-image:linear-gradient(90deg,#000 50%,rgba(0,0,0,.2) 100%);">sc</span>
<span class="t" style="left:1135.6px;top:59.5px;font:400 17.3px/17.3px Liberation Sans,sans-serif;color:#fff;letter-spacing:-0.07px;">reneelab.com</span>
<span class="t" style="left:1238.6px;top:59.5px;font:400 17.3px/17.3px Liberation Sans,sans-serif;color:#9aa0a6;letter-spacing:0.19px;">/convert-scanned-image-text.h...</span>
<span class="t" style="left:987.6px;top:181.0px;font:400 14.4px/14.4px Liberation Sans,sans-serif;color:#1b63c6;letter-spacing:0.19px;">Target: Convert the following scanned image into text.</span>
</body>
</html>
